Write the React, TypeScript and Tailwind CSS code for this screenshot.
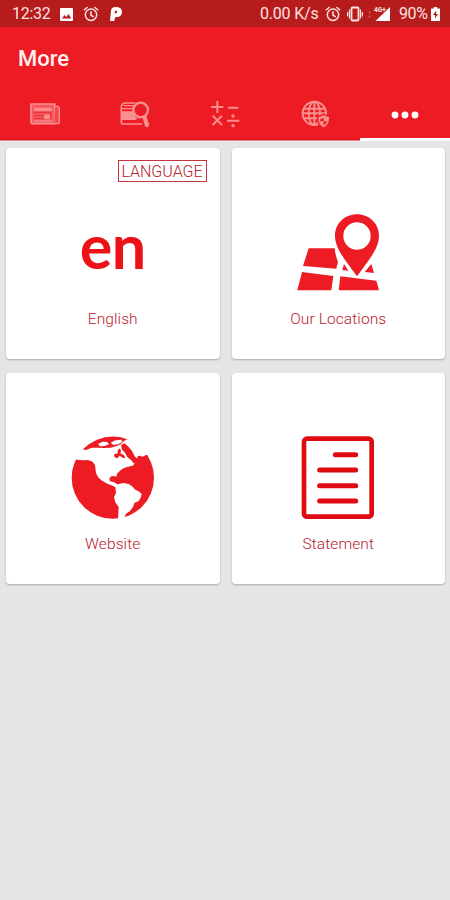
import React from "react";

const StatusBar: React.FC = () => (
    <div className="h-[27px] bg-[#b71c1c] text-[#fbe3e0] flex items-center pt-px pl-[12px] pr-[10px] text-[16px] leading-none">
        <span className="w-[48px] whitespace-nowrap tracking-[-0.3px]">12:32</span>
        <svg className="w-[13px] h-[13px]" viewBox="0 0 13 13">
            <rect width="13" height="13" rx="1" fill="#fff" />
            <path d="M2 10.5 4.5 7l1.8 2L8.6 6l2.6 4.5z" fill="#b71c1c" />
        </svg>
        <AlarmIcon className="ml-[10px] w-[16px] h-[16px]" />
        <svg className="ml-[11px] w-[12px] h-[14px]" viewBox="0 0 12 14">
            <path d="M0 14 1 3.5Q1.3 0 5.5 0 12 0 12 5q0 5.4-7 5.2L4.4 14z" fill="#fff" />
            <path d="M4.6 6.5 5 3.8q2.3-.6 2.3 1T4.600 6.500z" fill="#b71c1c" />
        </svg>
        <span className="ml-auto w-[59px] whitespace-nowrap tracking-[-0.2px]">0.00 K/s</span>
        <AlarmIcon className="ml-[6px] w-[16px] h-[16px]" />
        <svg className="ml-[6px] w-[16px] h-[16px]" viewBox="0 0 16 16" fill="none" stroke="#fbe3e0">
            <rect x="4.5" y="1.5" width="7" height="13" rx="1" strokeWidth="1.8" />
            <path d="M2.5 3.5v9M13.5 3.5v9M.6 6v4.5M15.4 6v4.5" strokeWidth="1.2" />
        </svg>
        <svg className="ml-[5px] w-[23px] h-[16px]" viewBox="0 0 23 16">
            <path d="M1.5 5.5v2M1.5 9.5v2" stroke="#e36b66" strokeWidth="1.3" />
            <path d="M22 1v14H7.5z" fill="#fff" />
            <text x="6" y="6.2" fontSize="6.5" fontWeight="700" fill="#fbe3e0" stroke="#b71c1c" strokeWidth="1" paintOrder="stroke">4G+</text>
        </svg>
        <span className="ml-[8px] w-[29px] whitespace-nowrap tracking-[-0.4px]">90%</span>
        <svg className="ml-[3px] w-[9px] h-[14px]" viewBox="0 0 9 14">
            <path d="M2.8 0h3.4v1.5H9V14H0V1.5h2.8z" fill="#fff" />
            <path d="M5.3 3.5 2 8h2v3.5L7 7H5.1z" fill="#b71c1c" />
        </svg>
    </div>
);

const AlarmIcon: React.FC<{ className: string }> = ({ className }) => (
    <svg className={className} viewBox="0 0 16 16" fill="none" stroke="#fbe3e0" strokeWidth="1.5">
        <circle cx="8" cy="8.8" r="5.7" />
        <path d="M.8 4.2 4.6 1M15.2 4.2 11.4 1M8 5.2v4l2.8 1.6" />
    </svg>
);

const NewsIcon: React.FC = () => (
    <svg className="w-[30px] h-[22px]" viewBox="0 0 90 66" fill="none" stroke="#f98f8f">
        <path d="M3 3h71v59H9q-6 0-6-6z" fill="#f4575c" strokeWidth="5" />
        <path d="M75 10h7q6 0 6 6v40q0 6-6 6h-9" fill="#f4474d" strokeWidth="4" />
        <path d="M12 19h53" strokeWidth="9" />
        <path d="M12 29h53M12 38h29M12 47h29" stroke="#e8303a" strokeWidth="3" />
        <path d="M12 54h53" strokeWidth="4" />
        <path d="M62 30v18" stroke="#e8303a" strokeWidth="3" />
        <path d="M43 35h17v13H43z" fill="#f98f8f" stroke="none" />
    </svg>
);

const CardSearchIcon: React.FC = () => (
    <svg className="w-[30px] h-[27px]" viewBox="0 0 90 81" fill="none" stroke="#f98f8f">
        <path d="M46 6H17Q4 6 4 19v44q0 6 6 6h57" strokeWidth="5" />
        <path d="M11 14h33M6 23h34" strokeWidth="4" />
        <path d="M3 31h37q0 15 13 22l-8 4H3z" fill="#f98f8f" stroke="none" />
        <circle cx="62" cy="27" r="22" strokeWidth="7" />
        <path d="m74 49 7 23" strokeWidth="13" strokeLinecap="round" />
    </svg>
);

const CalcIcon: React.FC = () => (
    <svg className="w-[30px] h-[28px]" viewBox="0 0 90 84" fill="none" stroke="#f98f8f" strokeWidth="6">
        <path d="M22 3v36M3 21h37M54 23h31M8 47l28 28M36 47 8 75M51 62h37" />
        <circle cx="69" cy="48" r="5" fill="#f98f8f" stroke="none" />
        <circle cx="69" cy="77" r="5" fill="#f98f8f" stroke="none" />
    </svg>
);

const GlobeShieldIcon: React.FC = () => (
    <svg className="w-[29px] h-[29px]" viewBox="0 0 87 87" fill="none" stroke="#f98f8f" strokeWidth="6">
        <circle cx="40" cy="40" r="35" />
        <ellipse cx="40" cy="40" rx="17" ry="35" />
        <path d="M40 5v70M9 26h62M5 40h70M9 55h62" />
        <path d="M68 42q8 7 18 7 2 26-18 36-20-10-18-36 10 0 18-7z" fill="#f98f8f" stroke="#ed1c24" strokeWidth="4" />
        <path d="M68 53v11H58q-1-5 0-7 6-1 10-4zM68 64h10q-2 8-10 12z" fill="#ed1c24" stroke="none" />
    </svg>
);

const DotsIcon: React.FC = () => (
    <svg className="w-[28px] h-[8px]" viewBox="0 0 28 8" fill="#fff">
        <circle cx="4" cy="4" r="3.4" />
        <circle cx="14" cy="4" r="3.4" />
        <circle cx="24" cy="4" r="3.4" />
    </svg>
);

const MapIcon: React.FC = () => (
    <svg className="w-[84px] h-[84px]" viewBox="33 33 252 252" fill="#ed1c24">
        <path d="M71 145h78q2 22 10 40l-5 21-100-8z" />
        <path d="m51 216 94 12-6 43H37z" />
        <path d="m166 229 108 13 8 29H161z" />
        <path d="m177 192 13 20-18-2zM259 192l8 27-28-3z" />
        <path fillRule="evenodd" d="M216 43c-37 0-66 28-66 64 0 42 37 80 66 122 29-42 66-80 66-122 0-36-29-64-66-64zm0 24a41 41 0 1 1 0 82 41 41 0 0 1 0-82z" />
    </svg>
);

const EarthIcon: React.FC = () => (
    <svg className="w-[84px] h-[84px]" viewBox="3 9 252 252">
        <circle cx="128.5" cy="134" r="123.5" fill="#ed1c24" />
        {/* north america, greenland and the arctic */}
        <path
            d="M8 76 L30 48 L48 51 L66 44 L86 44 L102 45 L122 44 L140 39 L152 34 L162 24 L174 18 L180 8 L220 20 L246 66 L228 66 L218 71 L210 68 L204 69 L200 77 L192 84 L194 92 L188 98 L174 101 L160 106 L150 113 L142 121 L139 131 L133 129 L124 130 L118 136 L120 145 L130 147 L138 151 L146 158 L140 165 L128 158 L112 152 L94 142 L84 132 L78 120 L75 96 L68 86 L54 81 L38 82 L22 80 Z"
            fill="#fff"
        />
        {/* south america */}
        <path
            d="M136 158 L146 153 L160 150 L176 153 L188 161 L194 169 L208 176 L215 183 L212 194 L206 204 L193 210 L189 222 L180 234 L168 242 L160 260 L144 260 L146 222 L136 208 L132 192 L138 180 Z"
            fill="#fff"
        />
        {/* caribbean */}
        <path d="M121 135 L130 131 L140 134 L148 140 L158 146 L146 149 L136 145 L126 142 Z" fill="#ed1c24" />
        {/* arctic islands */}
        <path d="M84 33 L98 26 L112 27 L117 34 L104 39 L90 40 Z M122 29 L136 22 L154 20 L157 26 L146 33 L130 36 Z" fill="#fff" />
        {/* baffin bay and labrador sea */}
        <path d="M153 36 L164 31 L176 42 L186 54 L194 70 L202 78 L192 92 L184 82 L172 72 L164 58 L156 50 Z" fill="#ed1c24" />
        {/* hudson bay */}
        <path d="M132 64 L143 61 L143 52 L150 46 L153 54 L151 61 L162 67 L166 76 L158 74 L149 68 L142 76 L134 73 Z" fill="#ed1c24" />
    </svg>
);

const StatementIcon: React.FC = () => (
    <svg className="w-[84px] h-[84px]" viewBox="33 33 252 252" fill="none" stroke="#df0a12">
        <rect x="57" y="41" width="203" height="234" rx="9" strokeWidth="14" />
        <path d="M151 89h61M104 135h108M104 182h108M104 228h108" strokeWidth="15" strokeLinecap="round" />
    </svg>
);

const tabs = [
    { id: "news", icon: <NewsIcon /> },
    { id: "cards", icon: <CardSearchIcon /> },
    { id: "calculator", icon: <CalcIcon /> },
    { id: "web", icon: <GlobeShieldIcon /> },
    { id: "more", icon: <DotsIcon />, active: true },
];

const items = [
    {
        label: "English",
        badge: "LANGUAGE",
        icon: <span className="font-[Lato,sans-serif] font-bold text-[61px] leading-[69px] tracking-[-0.5px] text-[#ed1218]">en</span>,
    },
    { label: "Our Locations", icon: <MapIcon /> },
    { label: "Website", icon: <EarthIcon /> },
    { label: "Statement", icon: <StatementIcon /> },
];

const App: React.FC = () => {
    return (
        <div className="w-full min-h-screen bg-[#e5e5e5] font-[Roboto,sans-serif]">
            <StatusBar />
            <header className="h-[114px] bg-[#ed1c24] flex flex-col">
                <h1 className="h-[62px] pl-[18px] flex items-center text-[22px] font-medium text-[#fff1ef]">More</h1>
                <nav className="flex-1 grid grid-cols-5">
                    {tabs.map((tab) => (
                        <div
                            key={tab.id}
                            className={tab.active
                                ? "pt-[2px] flex items-center justify-center border-b-[3px] border-white"
                                : "pb-px flex items-center justify-center border-b border-[#f08a90] shadow-[inset_0_-1px_0_#d9131b]"}
                        >
                            {tab.icon}
                        </div>
                    ))}
                </nav>
            </header>
            <main className="grid grid-cols-2 gap-x-[12px] gap-y-[14px] pt-[7px] pl-[6px] pr-[5px]">
                {items.map((item) => (
                    <div key={item.label} className="relative h-[211px] pt-[63px] flex flex-col items-center bg-white rounded-[4px] shadow-[0_1px_2px_rgba(0,0,0,0.25)]">
                        {item.badge && (
                            <span className="absolute top-[12px] right-[13px] h-[22px] w-[89px] pt-[2px] border border-[#c4343f] flex items-center justify-center text-[16px] font-light text-[#b8202e]">
                                {item.badge}
                            </span>
                        )}
                        <div className="h-[84px] flex">{item.icon}</div>
                        <span className="mt-[14px] text-[15.5px] leading-5 font-light tracking-[0.1px] text-[#b8202e]">{item.label}</span>
                    </div>
                ))}
            </main>
        </div>
    );
};

export default App;
